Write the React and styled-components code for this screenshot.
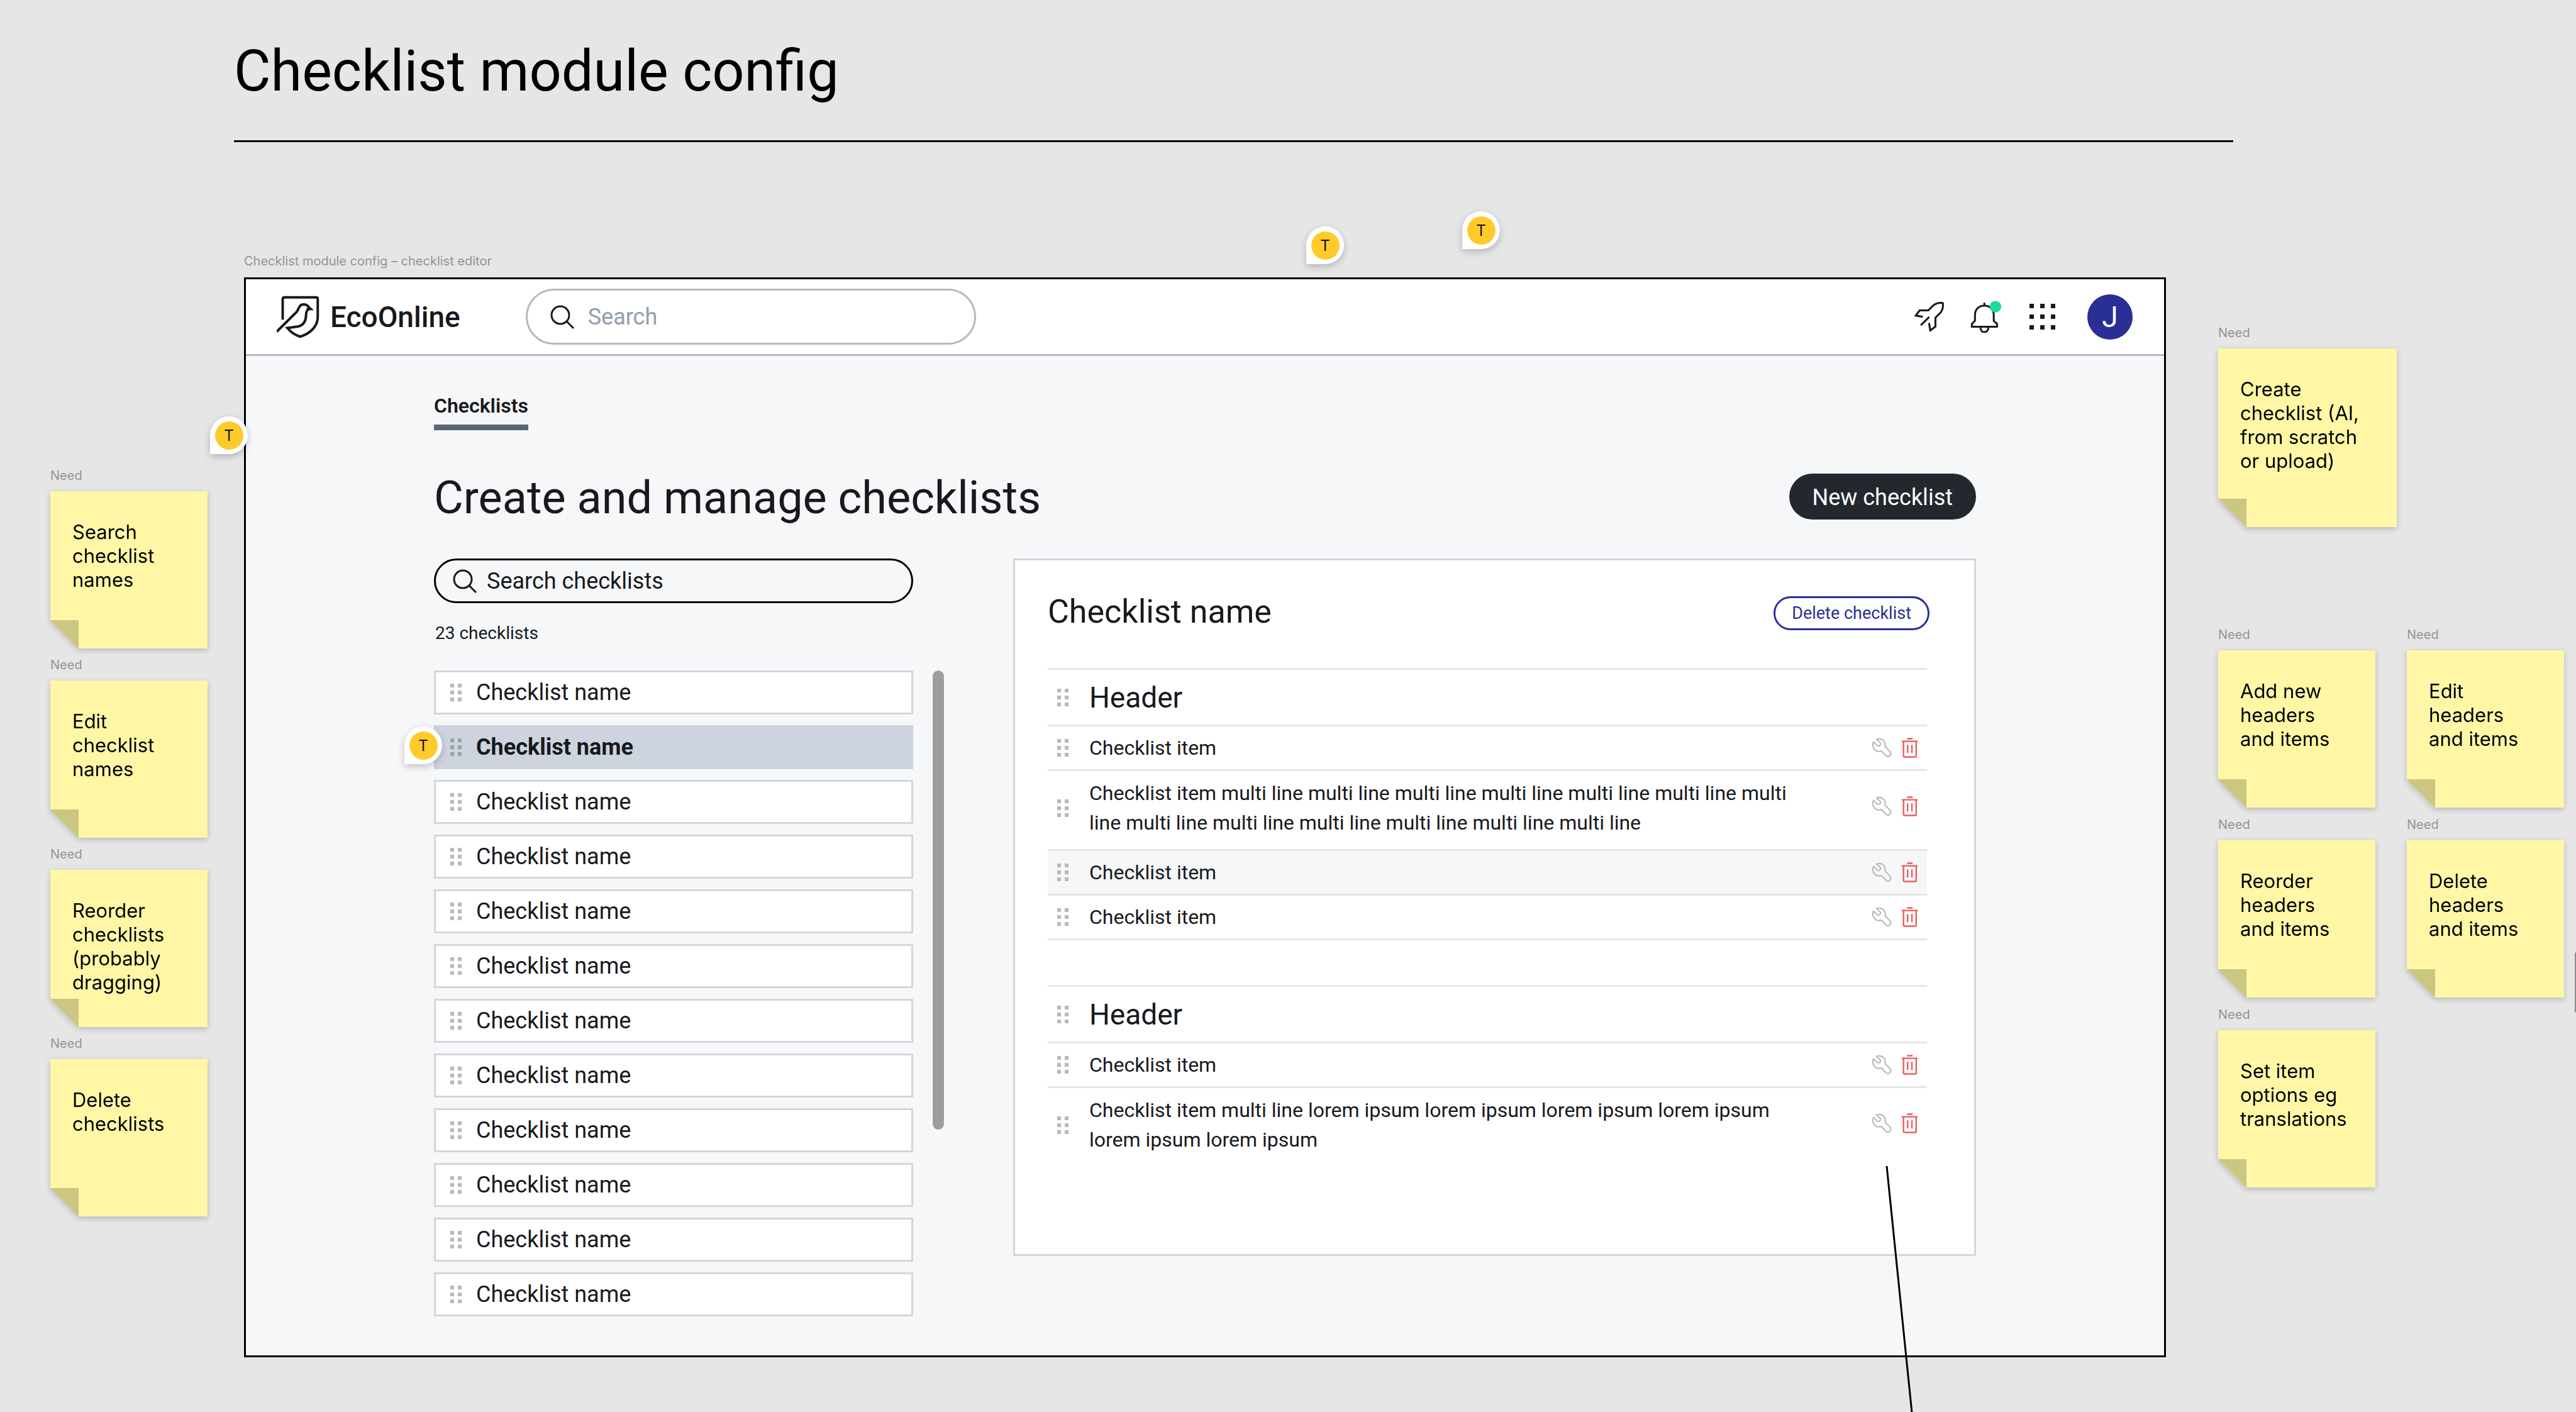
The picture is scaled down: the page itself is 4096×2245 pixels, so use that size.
import React from "react";
import styled, { createGlobalStyle, css } from "styled-components";

const ui = `Roboto, "Noto Sans", sans-serif`;
const note = `Inter, "Noto Sans", sans-serif`;
const ink = "#17191c";
const navy = "#292f94";
const hairline = "#e4e6e8";
const outline = "#d3d6da";

const GlobalStyle = createGlobalStyle`
  *, *::before, *::after { box-sizing: border-box; }
  body { margin: 0; background: #e6e6e6; color: ${ink}; font-family: ${ui}; }
  h1, h2, h3, p, ul { margin: 0; padding: 0; font-weight: 400; }
  ul { list-style: none; }
  button, input { font: inherit; color: inherit; }
  button { border: 0; padding: 0; background: none; cursor: pointer; }
  svg { display: block; flex: none; }
`;

const Canvas = styled.div`
  position: relative;
  min-height: 100vh;
  overflow: hidden;
`;

const CanvasHeader = styled.header`
  margin: 0 545px 0 372px;
  padding: 60px 0 55px;
  border-bottom: 3px solid #000;
`;

const CanvasTitle = styled.h1`
  color: #000;
  font-size: 90px;
  line-height: 108px;
`;

const Board = styled.div`
  display: grid;
  grid-template-columns: 250px minmax(0, 1fr) 551px;
  align-items: start;
  padding: 177px 18px 86px 80px;
`;

const LayerLabel = styled.p`
  color: #949494;
  font-family: ${note};
  font-size: 20px;
  line-height: 24px;
`;

/* Sticky notes */

const NoteColumn = styled.div`
  display: flex;
  flex-direction: column;
  gap: 14px;
  margin-top: 341px;
`;

const NoteArea = styled.div`
  display: flex;
  flex-direction: column;
  gap: 159px;
  margin-top: 114px;
`;

const NoteGrid = styled.div`
  display: grid;
  grid-template-columns: 250px 250px;
  gap: 15px 50px;
`;

const NoteBox = styled.section`
  display: flex;
  flex-direction: column;
  gap: 13px;
  width: ${(p) => p.$size}px;
`;

const NotePaper = styled.div`
  filter: drop-shadow(0 3px 5px rgba(0, 0, 0, 0.2));
`;

const NoteBody = styled.p`
  min-height: ${(p) => p.$size}px;
  padding: 46px 35px 0;
  color: #000;
  background:
    linear-gradient(#cbc681, #cbc681) left bottom / 45px 45px no-repeat,
    #fff7a5;
  clip-path: polygon(0 0, 100% 0, 100% 100%, 45px 100%, 0 calc(100% - 45px));
  font-family: ${note};
  font-size: 31px;
  line-height: 38px;
`;

function Sticky({ children, size = 250 }) {
  return (
    <NoteBox $size={size}>
      <LayerLabel>Need</LayerLabel>
      <NotePaper>
        <NoteBody $size={size}>{children}</NoteBody>
      </NotePaper>
    </NoteBox>
  );
}

/* App window */

const FrameColumn = styled.div`
  display: flex;
  flex-direction: column;
  gap: 14px;
  margin: 0 83px 0 58px;
`;

const Frame = styled.div`
  background: #f5f7f9;
  border: 3px solid #000;
`;

const TopBar = styled.header`
  display: flex;
  align-items: center;
  height: 122px;
  padding: 0 50px 0 49px;
  background: #fff;
  border-bottom: 3px solid #b9bbc2;
`;

const Brand = styled.a`
  display: flex;
  align-items: center;
  gap: 17px;
  color: inherit;
  font-size: 46px;
  font-weight: 500;
  line-height: 52px;
  text-decoration: none;
`;

const SearchField = styled.label`
  display: flex;
  align-items: center;
  border-radius: 45px;
  ${(p) =>
    p.$global
      ? css`
          flex: 0 1 716px;
          height: 89px;
          margin-left: 104px;
          padding: 0 36px;
          gap: 22px;
          background: #fff;
          border: 3px solid #b7b9c1;
        `
      : css`
          height: 71px;
          margin-right: 49px;
          padding: 0 27px;
          gap: 16px;
          border: 3px solid #000;
        `}
`;

const SearchInput = styled.input`
  flex: 1;
  min-width: 0;
  padding: 0;
  background: none;
  border: 0;
  outline: 0;
  font-size: 36px;
  line-height: 44px;
  &::placeholder {
    color: ${(p) => p.$hint};
    opacity: 1;
  }
`;

const Tools = styled.div`
  display: flex;
  align-items: center;
  gap: 42px;
  margin-left: auto;
`;

const ToolButton = styled.button`
  display: grid;
  place-items: center;
  width: 48px;
  height: 56px;
`;

const Avatar = styled.button`
  width: 72px;
  height: 72px;
  margin-left: 6px;
  background: ${navy};
  border-radius: 50%;
  color: #fff;
  font-size: 46px;
  line-height: 72px;
`;

const Main = styled.main`
  padding: 61px 299px 62px;
`;

const Tabs = styled.nav`
  display: flex;
`;

const Tab = styled.a`
  padding-bottom: 12px;
  border-bottom: 9px solid #576777;
  color: inherit;
  font-size: 32px;
  font-weight: 600;
  line-height: 36px;
  text-decoration: none;
`;

const Heading = styled.div`
  display: flex;
  align-items: flex-start;
  justify-content: space-between;
  margin: 69px 0 57px;
`;

const PageTitle = styled.h2`
  font-size: 72px;
  line-height: 78px;
`;

const PrimaryButton = styled.button`
  height: 73px;
  padding: 2px 37px 0;
  background: #23282f;
  border-radius: 37px;
  color: #fff;
  font-size: 36px;
`;

const Columns = styled.div`
  display: grid;
  grid-template-columns: 811px minmax(0, 1fr);
  align-items: start;
  gap: 110px;
`;

const Count = styled.p`
  margin: 31px 0 42px 2px;
  font-size: 28px;
  line-height: 34px;
`;

const ListArea = styled.div`
  display: flex;
  align-items: flex-start;
  gap: 31px;
`;

const List = styled.ul`
  display: flex;
  flex: 1;
  flex-direction: column;
  gap: 17px;
`;

const ListButton = styled.button`
  display: flex;
  align-items: center;
  gap: 23px;
  width: 100%;
  height: 70px;
  padding: 0 23px;
  background: ${(p) => (p.$selected ? "#ced4dd" : "#fff")};
  border: 3px solid ${(p) => (p.$selected ? "#ced4dd" : outline)};
  font-size: 36px;
  font-weight: ${(p) => (p.$selected ? 700 : 400)};
  text-align: left;
`;

const ScrollThumb = styled.div`
  width: 18px;
  height: 730px;
  background: #9c9d9f;
  border-radius: 9px;
`;

const Panel = styled.section`
  display: flex;
  flex-direction: column;
  min-height: 1109px;
  padding: 50px 75px 50px 52px;
  background: #fff;
  border: 3px solid ${outline};
`;

const PanelHeading = styled.div`
  display: flex;
  align-items: center;
  justify-content: space-between;
  margin: 0 -4px 57px 0;
`;

const PanelTitle = styled.h3`
  font-size: 52px;
  line-height: 64px;
`;

const OutlineButton = styled.button`
  height: 54px;
  margin-top: 4px;
  padding: 0 26px;
  border: 3px solid ${navy};
  border-radius: 27px;
  color: ${navy};
  font-size: 27px;
`;

const Group = styled.ul`
  border-top: 3px solid ${hairline};
  & + & {
    margin-top: 71px;
  }
`;

const Row = styled.li`
  display: flex;
  align-items: center;
  gap: 33px;
  min-height: ${(p) => (p.$header ? 90 : 71)}px;
  padding: ${(p) => (p.$multi ? "12px 14px 18px 15px" : "0 14px 0 15px")};
  background: ${(p) => (p.$hover ? "#f5f7f9" : "none")};
  border-bottom: 3px solid ${hairline};
  &:last-child {
    border-bottom-color: ${(p) => (p.$open ? "transparent" : hairline)};
  }
`;

const RowHeader = styled.h4`
  margin: 0;
  font-size: 46px;
  font-weight: 400;
  line-height: 56px;
`;

const RowText = styled.p`
  max-width: 1140px;
  font-size: 32px;
  line-height: 47px;
`;

const RowActions = styled.div`
  display: flex;
  gap: 15px;
  margin-left: auto;
  padding-bottom: ${(p) => (p.$raised ? 6 : 0)}px;
`;

/* Comment pins and connector lie over the canvas */

const Pin = styled.button`
  position: absolute;
  top: ${(p) => p.$y}px;
  left: ${(p) => p.$x}px;
  display: grid;
  place-items: center;
  width: 60px;
  height: 60px;
  background: #fff;
  border-radius: 30px 30px 30px 0;
  box-shadow: 0 4px 12px rgba(0, 0, 0, 0.22);
`;

const PinFace = styled.span`
  width: 45px;
  height: 45px;
  background: #ffcb2b;
  border-radius: 50%;
  color: #111;
  font-family: ${note};
  font-size: 24px;
  line-height: 45px;
  text-align: center;
`;

const Connector = styled.svg`
  position: absolute;
  top: 1854px;
  left: 2998px;
`;

const EdgeHandle = styled.div`
  position: absolute;
  top: 1514px;
  right: 0;
  width: 2px;
  height: 96px;
  background: #8f8f8f;
  border-radius: 2px 0 0 2px;
`;

/* Drawings */

const Logo = () => (
  <svg width="68" height="68" viewBox="50 79 222 222" fill="none" stroke={ink} strokeWidth="13" aria-hidden="true">
    <path d="M81 204V97Q81 88 90 88H254Q263 88 263 97V188C263 240 224 275 172 292C145 284 121 266 105 247L158 240C188 234 201 212 202 184C202 162 206 151 219 148" />
    <path d="M50 266L155 162C163 150 166 125 190 125C205 125 213 133 218 141L226 148H206" />
  </svg>
);

const SearchIcon = () => (
  <svg width="38" height="38" viewBox="0 0 38 38" fill="none" stroke={ink} strokeWidth="3" aria-hidden="true">
    <circle cx="16" cy="16" r="14" />
    <path d="M26 26L37 37" />
  </svg>
);

const Rocket = () => (
  <svg width="47" height="47" viewBox="91 113 153 153" fill="none" stroke={ink} strokeWidth="10" aria-hidden="true">
    <path d="M135 190L98 184L118 157H163L186 134C200 121 220 116 238 119C241 140 236 160 222 173L200 195V241L173 261L167 222M124 234L168 191" />
  </svg>
);

const Bell = () => (
  <svg width="50" height="54" viewBox="384 98 164 176" fill="none" stroke={ink} strokeWidth="10" aria-hidden="true">
    <path d="M392 237V222L408 206V175C408 145 430 127 457 127C484 127 506 145 506 175V206L523 222V237ZM457 111V127M437 241C437 256 446 265 457 265C468 265 478 256 478 241" />
    <circle cx="515" cy="132" r="30" fill="#1fd995" stroke="none" />
  </svg>
);

const AppsGrid = () => (
  <svg width="41" height="41" viewBox="0 0 41 41" fill={ink} aria-hidden="true">
    {[0, 17, 34].map((y) => [0, 17, 34].map((x) => <rect key={`${x}-${y}`} x={x} y={y} width="7" height="7" />))}
  </svg>
);

const DragDots = ({ dark }) => (
  <svg width="18" height="28" viewBox="0 0 18 28" fill={dark ? "#9a9fa6" : "#b9b9b9"} aria-hidden="true">
    {[0, 11, 22].map((y) => [0, 12].map((x) => <rect key={`${x}-${y}`} x={x} y={y} width="6" height="6" />))}
  </svg>
);

const Wrench = () => (
  <svg width="32" height="32" viewBox="77 78 107 107" fill="none" stroke="#b8b8b8" strokeWidth="7" strokeLinejoin="round" aria-hidden="true">
    <path d="M87 100L105 118C110 122 117 122 121 118C126 113 125 107 121 103L103 87C113 82 129 83 139 92C149 101 151 113 148 124L175 152C181 159 180 168 174 174C168 180 159 180 153 173L129 148C115 153 101 150 92 140C82 129 81 112 87 100Z" />
  </svg>
);

const Trash = () => (
  <svg width="27" height="32" viewBox="230 78 90 108" fill="none" stroke="#ee5a58" strokeWidth="8" aria-hidden="true">
    <path d="M232 97H318M261 83H291M242 97V177Q242 181 246 181H306Q310 181 310 177V97M264 116V160M287 116V160" />
  </svg>
);

const checklists = Array.from({ length: 12 }, (_, i) => ({ id: i, name: "Checklist name" }));

const groups = [
  {
    title: "Header",
    items: [
      { text: "Checklist item" },
      {
        text: "Checklist item multi line multi line multi line multi line multi line multi line multi line multi line multi line multi line multi line multi line multi line",
        multi: true,
      },
      { text: "Checklist item", hover: true },
      { text: "Checklist item" },
    ],
  },
  {
    title: "Header",
    items: [
      { text: "Checklist item" },
      {
        text: "Checklist item multi line lorem ipsum lorem ipsum lorem ipsum lorem ipsum lorem ipsum lorem ipsum",
        multi: true,
        open: true,
      },
    ],
  },
];

const pins = [
  { x: 2077, y: 360 },
  { x: 2325, y: 336 },
  { x: 334, y: 662 },
  { x: 643, y: 1155 },
];

export default function App() {
  return (
    <Canvas>
      <GlobalStyle />
      <CanvasHeader>
        <CanvasTitle>Checklist module config</CanvasTitle>
      </CanvasHeader>

      <Board>
        <NoteColumn>
          <Sticky>Search checklist names</Sticky>
          <Sticky>Edit checklist names</Sticky>
          <Sticky>Reorder checklists (probably dragging)</Sticky>
          <Sticky>Delete checklists</Sticky>
        </NoteColumn>

        <FrameColumn>
          <LayerLabel>Checklist module config – checklist editor</LayerLabel>
          <Frame>
            <TopBar>
              <Brand href="#home">
                <Logo />
                EcoOnline
              </Brand>
              <SearchField $global>
                <SearchIcon />
                <SearchInput type="search" placeholder="Search" aria-label="Search" $hint="#929dab" />
              </SearchField>
              <Tools>
                <ToolButton aria-label="What's new"><Rocket /></ToolButton>
                <ToolButton aria-label="Notifications"><Bell /></ToolButton>
                <ToolButton aria-label="Apps"><AppsGrid /></ToolButton>
                <Avatar aria-label="Account">J</Avatar>
              </Tools>
            </TopBar>

            <Main>
              <Tabs>
                <Tab href="#checklists">Checklists</Tab>
              </Tabs>
              <Heading>
                <PageTitle>Create and manage checklists</PageTitle>
                <PrimaryButton>New checklist</PrimaryButton>
              </Heading>

              <Columns>
                <div>
                  <SearchField>
                    <SearchIcon />
                    <SearchInput type="search" placeholder="Search checklists" aria-label="Search checklists" $hint={ink} />
                  </SearchField>
                  <Count>23 checklists</Count>
                  <ListArea>
                    <List>
                      {checklists.map((c) => (
                        <li key={c.id}>
                          <ListButton $selected={c.id === 1}>
                            <DragDots dark={c.id === 1} />
                            {c.name}
                          </ListButton>
                        </li>
                      ))}
                    </List>
                    <ScrollThumb />
                  </ListArea>
                </div>

                <Panel>
                  <PanelHeading>
                    <PanelTitle>Checklist name</PanelTitle>
                    <OutlineButton>Delete checklist</OutlineButton>
                  </PanelHeading>
                  {groups.map((g, gi) => (
                    <Group key={gi}>
                      <Row $header>
                        <DragDots />
                        <RowHeader>{g.title}</RowHeader>
                      </Row>
                      {g.items.map((item, i) => (
                        <Row key={i} $multi={item.multi} $hover={item.hover} $open={item.open}>
                          <DragDots />
                          <RowText>{item.text}</RowText>
                          <RowActions $raised={item.multi}>
                            <button aria-label="Item options"><Wrench /></button>
                            <button aria-label="Delete item"><Trash /></button>
                          </RowActions>
                        </Row>
                      ))}
                    </Group>
                  ))}
                </Panel>
              </Columns>
            </Main>
          </Frame>
        </FrameColumn>

        <NoteArea>
          <Sticky size={284}>Create checklist (AI, from scratch or upload)</Sticky>
          <NoteGrid>
            <Sticky>Add new headers and items</Sticky>
            <Sticky>Edit headers and items</Sticky>
            <Sticky>Reorder headers and items</Sticky>
            <Sticky>Delete headers and items</Sticky>
            <Sticky>Set item options eg translations</Sticky>
          </NoteGrid>
        </NoteArea>
      </Board>

      <Connector width="46" height="392" fill="none" stroke="#000" strokeWidth="3" aria-hidden="true">
        <path d="M2 0L42 392" />
      </Connector>
      {pins.map((p) => (
        <Pin key={p.x} $x={p.x} $y={p.y} aria-label="Comment by T">
          <PinFace>T</PinFace>
        </Pin>
      ))}
      <EdgeHandle />
    </Canvas>
  );
}
